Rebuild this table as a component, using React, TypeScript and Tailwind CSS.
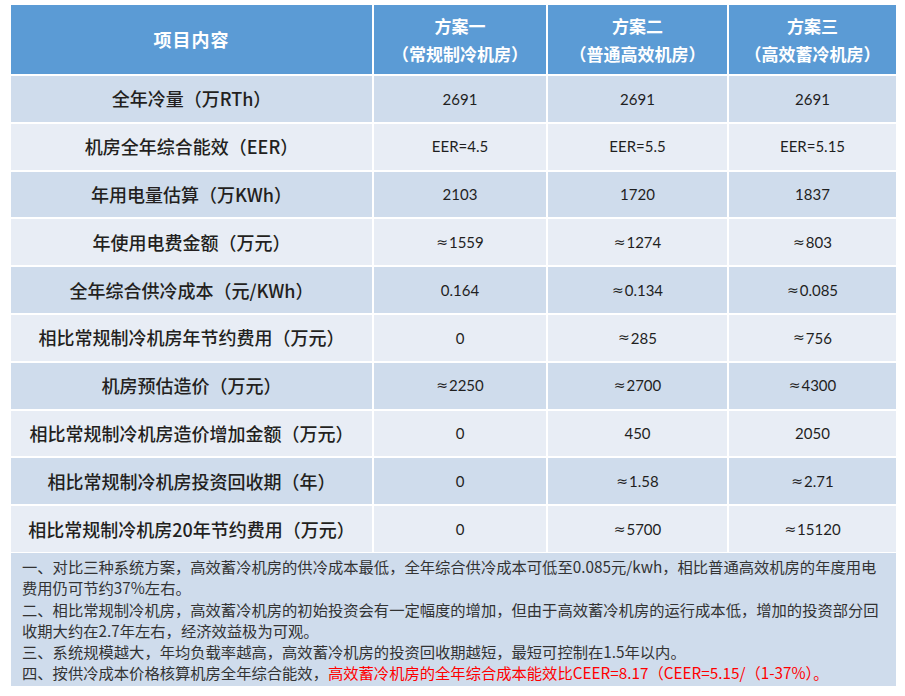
import React from 'react'

interface Row {
  label: string
  values: string[]
}

const rows: Row[] = [
  { label: '全年冷量（万RTh）', values: ['2691', '2691', '2691'] },
  { label: '机房全年综合能效（EER）', values: ['EER=4.5', 'EER=5.5', 'EER=5.15'] },
  { label: '年用电量估算（万KWh）', values: ['2103', '1720', '1837'] },
  { label: '年使用电费金额（万元）', values: ['≈1559', '≈1274', '≈803'] },
  { label: '全年综合供冷成本（元/KWh）', values: ['0.164', '≈0.134', '≈0.085'] },
  { label: '相比常规制冷机房年节约费用（万元）', values: ['0', '≈285', '≈756'] },
  { label: '机房预估造价（万元）', values: ['≈2250', '≈2700', '≈4300'] },
  { label: '相比常规制冷机房造价增加金额（万元）', values: ['0', '450', '2050'] },
  { label: '相比常规制冷机房投资回收期（年）', values: ['0', '≈1.58', '≈2.71'] },
  { label: '相比常规制冷机房20年节约费用（万元）', values: ['0', '≈5700', '≈15120'] },
]

const plans = [
  { name: '方案一', sub: '（常规制冷机房）' },
  { name: '方案二', sub: '（普通高效机房）' },
  { name: '方案三', sub: '（高效蓄冷机房）' },
]

const cjk = "font-['Noto_Sans_CJK_SC','Noto_Sans',sans-serif]"
const num = "font-['Lato','Noto_Sans_CJK_SC',sans-serif]"

// the approx sign is wider in the reference than Lato's glyph
const renderValue = (v: string) => {
  if (!v.startsWith('≈')) return v
  return (
    <>
      <span className="font-['DejaVu_Sans',sans-serif] text-[14px] mr-[1px]">≈</span>
      {v.slice(1)}
    </>
  )
}

export default function App() {
  return (
    <div className={`bg-white w-[905px] h-[696px] pt-[5px] pl-[11px] ${cjk}`}>
      <div className="w-[885px] grid grid-cols-[361px_172px_179px_167px] gap-[2px]">
        {/* Header */}
        <div className="h-[69px] bg-[#5b9bd5] text-white font-bold text-[18px] tracking-[1px] flex items-center justify-center">
          项目内容
        </div>
        {plans.map((p) => (
          <div
            key={p.name}
            className="h-[69px] bg-[#5b9bd5] text-white font-bold text-[17px] leading-[28px] flex flex-col items-center justify-center"
          >
            <span>{p.name}</span>
            <span>{p.sub}</span>
          </div>
        ))}

        {/* Body */}
        {rows.map((r, i) => {
          const bg = i % 2 === 0 ? 'bg-[#cfdcec]' : 'bg-[#e8edf5]'
          return (
            <React.Fragment key={r.label}>
              <div className={`h-[45.8px] ${bg} flex items-center justify-center text-[18px] font-medium text-[#231f20]`}>
                {r.label}
              </div>
              {r.values.map((v, j) => (
                <div
                  key={j}
                  className={`h-[45.8px] ${bg} flex items-center justify-center text-[15px] text-[#1f1f1f] ${num}`}
                >
                  {renderValue(v)}
                </div>
              ))}
            </React.Fragment>
          )
        })}
      </div>

      {/* Notes */}
      <div className="w-[885px] mt-[1px] h-[133px] bg-[#cfdcec] pl-[11px] pt-[3px] text-[15.3px] leading-[21.3px] text-[#333333] whitespace-nowrap">
        <div>一、对比三种系统方案，高效蓄冷机房的供冷成本最低，全年综合供冷成本可低至0.085元/kwh，相比普通高效机房的年度用电</div>
        <div>费用仍可节约37%左右。</div>
        <div>二、相比常规制冷机房，高效蓄冷机房的初始投资会有一定幅度的增加，但由于高效蓄冷机房的运行成本低，增加的投资部分回</div>
        <div>收期大约在2.7年左右，经济效益极为可观。</div>
        <div>三、系统规模越大，年均负载率越高，高效蓄冷机房的投资回收期越短，最短可控制在1.5年以内。</div>
        <div>
          四、按供冷成本价格核算机房全年综合能效，
          <span className="text-[#ff0000]">高效蓄冷机房的全年综合成本能效比CEER=8.17（CEER=5.15/（1-37%）。</span>
        </div>
      </div>
    </div>
  )
}
